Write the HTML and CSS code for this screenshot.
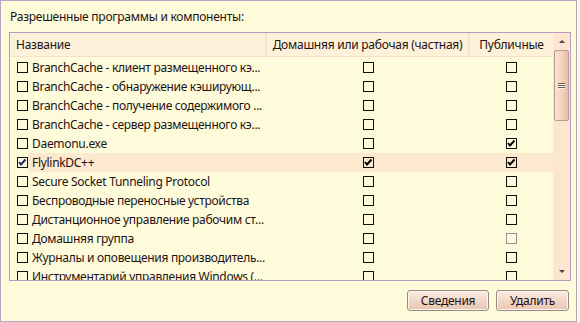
FILE: index.html
```html
<!DOCTYPE html>
<html lang="ru">
<head>
    <meta charset="UTF-8">
    <title>Разрешенные программы</title>
    <link rel="stylesheet" href="styles.css">
</head>
<body>
    <div class="frame">
        <div class="caption">Разрешенные программы и компоненты:</div>

        <div class="list">
            <div class="list-main">
                <div class="head">
                    <div class="col c1">Название</div>
                    <div class="col c2">Домашняя или рабочая (частная)</div>
                    <div class="col c3">Публичные</div>
                </div>

                <div class="row">
                    <div class="col c1"><span class="box"></span><span class="name">BranchCache - клиент размещенного кэ...</span></div>
                    <div class="col c2"><span class="box"></span></div>
                    <div class="col c3"><span class="box"></span></div>
                </div>
                <div class="row">
                    <div class="col c1"><span class="box"></span><span class="name">BranchCache - обнаружение кэширующ...</span></div>
                    <div class="col c2"><span class="box"></span></div>
                    <div class="col c3"><span class="box"></span></div>
                </div>
                <div class="row">
                    <div class="col c1"><span class="box"></span><span class="name">BranchCache - получение содержимого ...</span></div>
                    <div class="col c2"><span class="box"></span></div>
                    <div class="col c3"><span class="box"></span></div>
                </div>
                <div class="row">
                    <div class="col c1"><span class="box"></span><span class="name">BranchCache - сервер размещенного кэ...</span></div>
                    <div class="col c2"><span class="box"></span></div>
                    <div class="col c3"><span class="box"></span></div>
                </div>
                <div class="row">
                    <div class="col c1"><span class="box"></span><span class="name">Daemonu.exe</span></div>
                    <div class="col c2"><span class="box"></span></div>
                    <div class="col c3"><span class="box checked"><svg viewBox="0 0 11 11" width="11" height="11"><path d="M2 5 L4 7.5 L8.5 2.5" fill="none" stroke="#000" stroke-width="2"/></svg></span></div>
                </div>
                <div class="row selected">
                    <div class="col c1"><span class="box checked"><svg viewBox="0 0 11 11" width="11" height="11"><path d="M2 5 L4 7.5 L8.5 2.5" fill="none" stroke="#1c2a6a" stroke-width="2"/></svg></span><span class="name">FlylinkDC++</span></div>
                    <div class="col c2"><span class="box checked"><svg viewBox="0 0 11 11" width="11" height="11"><path d="M2 5 L4 7.5 L8.5 2.5" fill="none" stroke="#000" stroke-width="2"/></svg></span></div>
                    <div class="col c3"><span class="box checked"><svg viewBox="0 0 11 11" width="11" height="11"><path d="M2 5 L4 7.5 L8.5 2.5" fill="none" stroke="#000" stroke-width="2"/></svg></span></div>
                </div>
                <div class="row">
                    <div class="col c1"><span class="box"></span><span class="name">Secure Socket Tunneling Protocol</span></div>
                    <div class="col c2"><span class="box"></span></div>
                    <div class="col c3"><span class="box"></span></div>
                </div>
                <div class="row">
                    <div class="col c1"><span class="box"></span><span class="name">Беспроводные переносные устройства</span></div>
                    <div class="col c2"><span class="box"></span></div>
                    <div class="col c3"><span class="box"></span></div>
                </div>
                <div class="row">
                    <div class="col c1"><span class="box"></span><span class="name">Дистанционное управление рабочим ст...</span></div>
                    <div class="col c2"><span class="box"></span></div>
                    <div class="col c3"><span class="box"></span></div>
                </div>
                <div class="row">
                    <div class="col c1"><span class="box"></span><span class="name">Домашняя группа</span></div>
                    <div class="col c2"><span class="box"></span></div>
                    <div class="col c3"><span class="box disabled"></span></div>
                </div>
                <div class="row">
                    <div class="col c1"><span class="box"></span><span class="name">Журналы и оповещения производитель...</span></div>
                    <div class="col c2"><span class="box"></span></div>
                    <div class="col c3"><span class="box"></span></div>
                </div>
                <div class="row">
                    <div class="col c1"><span class="box"></span><span class="name">Инструментарий управления Windows (...</span></div>
                    <div class="col c2"><span class="box"></span></div>
                    <div class="col c3"><span class="box"></span></div>
                </div>
            </div>

            <div class="scroll">
                <div class="arrow up"></div>
                <div class="thumb">
                    <span class="grip"></span>
                    <span class="grip"></span>
                    <span class="grip"></span>
                </div>
                <div class="track"></div>
                <div class="arrow down"></div>
            </div>
        </div>

        <div class="buttons">
            <button class="btn info">Сведения</button>
            <button class="btn del">Удалить</button>
        </div>
    </div>
</body>
</html>
```

FILE: styles.css
```css
* {
    box-sizing: border-box;
}
body {
    margin: 0;
    padding: 0;
    background-color: #fefbdb;
    font-family: "Noto Sans", "Liberation Sans", sans-serif;
    font-size: 12px;
    letter-spacing: -0.25px;
    color: #1e1212;
}
.frame {
    width: 577px;
    height: 322px;
    border: 1px solid #bba5c5;
    padding: 0 0 0 8px;
}
.caption {
    height: 31px;
    line-height: 31px;
    padding-left: 1px;
}
.list {
    width: 562px;
    height: 249px;
    border: 1px solid #b39cc0;
    display: flex;
    overflow: hidden;
}
.list-main {
    width: 543px;
    overflow: hidden;
}
.head {
    display: flex;
    height: 24px;
    background-color: #fdf1da;
    border-bottom: 1px solid #f4e0cc;
    margin-bottom: 1px;
}
.head .col {
    line-height: 22px;
    border-right: 2px solid #f6e2cf;
}
.head .c1 {
    padding-left: 6px;
    justify-content: flex-start;
}
.head .c3 {
    border-right: none;
}
.row {
    display: flex;
    height: 19px;
}
.col {
    display: flex;
    align-items: center;
    justify-content: center;
    white-space: nowrap;
    overflow: hidden;
}
.c1 {
    width: 257px;
    justify-content: flex-start;
    padding-left: 7px;
}
.c2 {
    width: 203px;
}
.c3 {
    width: 83px;
}
.row .c1 {
    padding-right: 0;
}
.name {
    overflow: hidden;
    text-overflow: ellipsis;
    padding-left: 4px;
    line-height: 19px;
    letter-spacing: -0.3px;
    flex: 1;
}
.selected .c2, .selected .c3, .selected .name {
    background-color: #fde8d0;
}
.box {
    width: 11px;
    height: 11px;
    border: 1px solid #111;
    flex: none;
    position: relative;
}
.box svg {
    position: absolute;
    left: -1px;
    top: -1px;
}
.box.disabled {
    border-color: #a48896;
}
.scroll {
    width: 17px;
    display: flex;
    flex-direction: column;
    background-color: #fde6cf;
}
.arrow {
    height: 17px;
    display: flex;
    align-items: center;
    justify-content: center;
}
.arrow.up::after {
    content: "";
    border-left: 3px solid transparent;
    border-right: 3px solid transparent;
    border-bottom: 3px solid #444;
}
.arrow.down::after {
    content: "";
    border-left: 3px solid transparent;
    border-right: 3px solid transparent;
    border-top: 3px solid #444;
}
.thumb {
    height: 71px;
    margin: 0 1px;
    border: 1px solid #b89a94;
    border-radius: 2px;
    background: linear-gradient(to right, #fbe2d0, #f4cfba 60%, #e9bca6);
    display: flex;
    flex-direction: column;
    align-items: center;
    justify-content: center;
    gap: 1px;
}
.grip {
    width: 7px;
    height: 1px;
    background-color: #6d5a58;
    box-shadow: 0 1px 0 #fff3ea;
}
.track {
    flex: 1;
}
.buttons {
    display: flex;
    justify-content: flex-end;
    gap: 7px;
    padding: 9px 7px 0 0;
}
.btn {
    font-family: "Noto Sans", "Liberation Sans", sans-serif;
    font-size: 12px;
    letter-spacing: -0.25px;
    color: #1e1212;
    height: 21px;
    padding: 0;
    border: 1px solid #9a8a86;
    border-radius: 3px;
    background: linear-gradient(to bottom, #fbeee6, #f2d8c6 50%, #e8c6b0);
    box-shadow: inset 0 0 0 1px #fff6ee;
}
.info {
    width: 82px;
}
.del {
    width: 73px;
}
```
